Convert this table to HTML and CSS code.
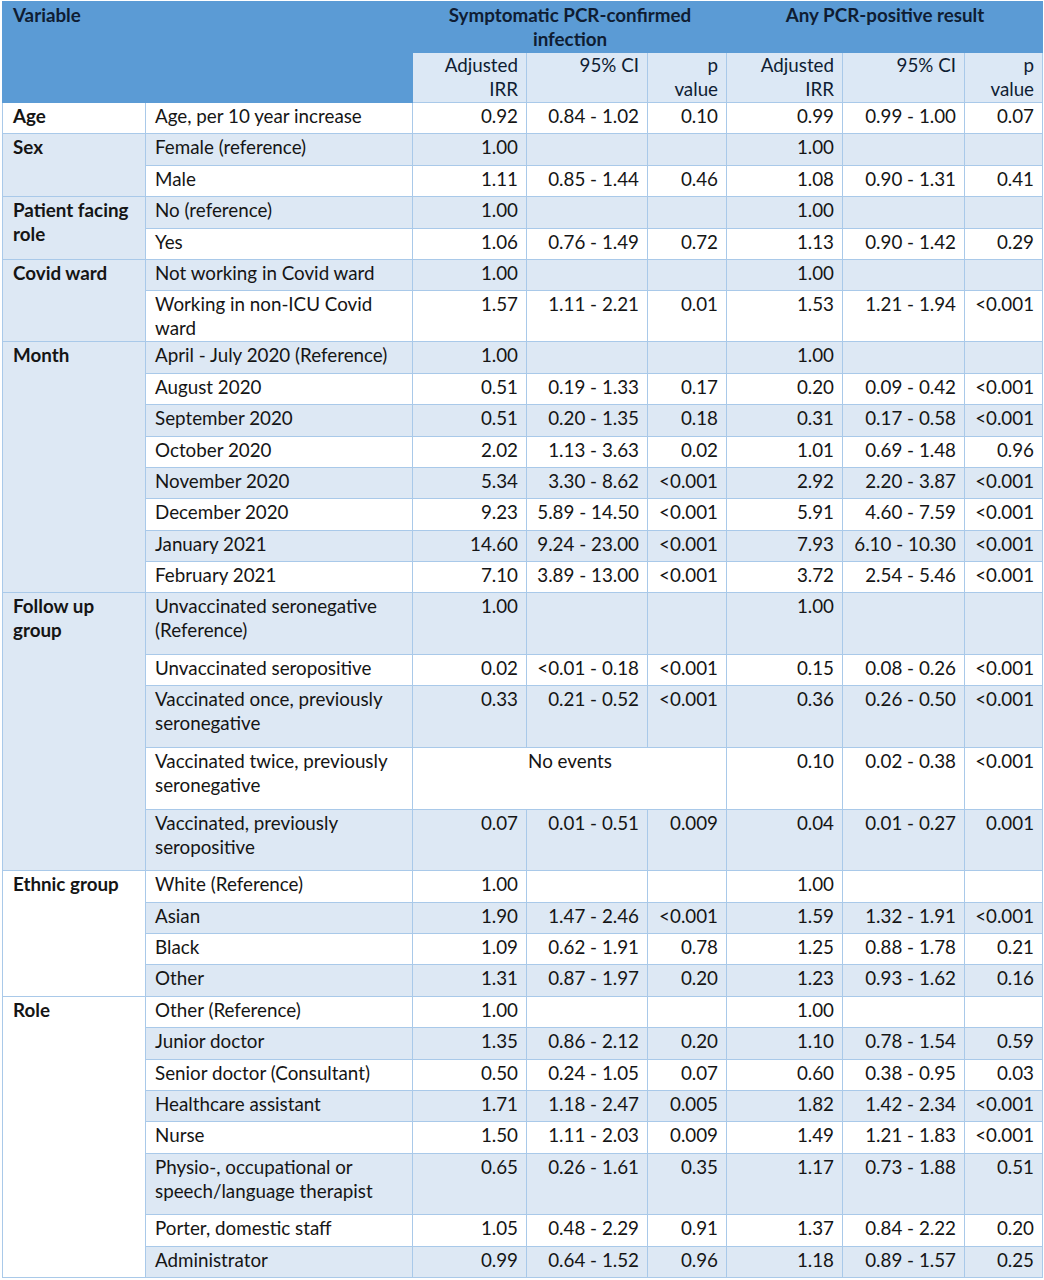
FILE: index.html
```html
<!DOCTYPE html>
<html lang="en">
<head>
  <meta charset="UTF-8" />
  <title>Incidence rate ratios</title>
  <link rel="stylesheet" href="styles.css">
</head>
<body>
  <table class="irr">
    <colgroup>
      <col class="c-var"><col class="c-level">
      <col class="c-irr"><col class="c-ci"><col class="c-p">
      <col class="c-irr2"><col class="c-ci2"><col class="c-p2">
    </colgroup>
    <thead>
      <tr class="head-top">
        <th colspan="2" rowspan="2" class="left">Variable</th>
        <th colspan="3">Symptomatic PCR-confirmed infection</th>
        <th colspan="3">Any PCR-positive result</th>
      </tr>
      <tr class="head-sub">
        <th>Adjusted IRR</th><th>95% CI</th><th>p<br>value</th>
        <th>Adjusted IRR</th><th>95% CI</th><th>p<br>value</th>
      </tr>
    </thead>
    <tbody>
      <tr>
        <td class="group">Age</td><td>Age, per 10 year increase</td>
        <td class="num">0.92</td><td class="num">0.84 - 1.02</td><td class="num">0.10</td>
        <td class="num">0.99</td><td class="num">0.99 - 1.00</td><td class="num">0.07</td>
      </tr>

      <tr class="band">
        <td class="group" rowspan="2">Sex</td><td>Female (reference)</td>
        <td class="num">1.00</td><td></td><td></td>
        <td class="num">1.00</td><td></td><td></td>
      </tr>
      <tr>
        <td>Male</td>
        <td class="num">1.11</td><td class="num">0.85 - 1.44</td><td class="num">0.46</td>
        <td class="num">1.08</td><td class="num">0.90 - 1.31</td><td class="num">0.41</td>
      </tr>

      <tr class="band">
        <td class="group" rowspan="2">Patient facing role</td><td>No (reference)</td>
        <td class="num">1.00</td><td></td><td></td>
        <td class="num">1.00</td><td></td><td></td>
      </tr>
      <tr>
        <td>Yes</td>
        <td class="num">1.06</td><td class="num">0.76 - 1.49</td><td class="num">0.72</td>
        <td class="num">1.13</td><td class="num">0.90 - 1.42</td><td class="num">0.29</td>
      </tr>

      <tr class="band">
        <td class="group" rowspan="2">Covid ward</td><td>Not working in Covid ward</td>
        <td class="num">1.00</td><td></td><td></td>
        <td class="num">1.00</td><td></td><td></td>
      </tr>
      <tr class="two-short">
        <td>Working in non-ICU Covid ward</td>
        <td class="num">1.57</td><td class="num">1.11 - 2.21</td><td class="num">0.01</td>
        <td class="num">1.53</td><td class="num">1.21 - 1.94</td><td class="num">&lt;0.001</td>
      </tr>

      <tr class="band">
        <td class="group" rowspan="8">Month</td><td>April - July 2020 (Reference)</td>
        <td class="num">1.00</td><td></td><td></td>
        <td class="num">1.00</td><td></td><td></td>
      </tr>
      <tr>
        <td>August 2020</td>
        <td class="num">0.51</td><td class="num">0.19 - 1.33</td><td class="num">0.17</td>
        <td class="num">0.20</td><td class="num">0.09 - 0.42</td><td class="num">&lt;0.001</td>
      </tr>
      <tr class="band">
        <td>September 2020</td>
        <td class="num">0.51</td><td class="num">0.20 - 1.35</td><td class="num">0.18</td>
        <td class="num">0.31</td><td class="num">0.17 - 0.58</td><td class="num">&lt;0.001</td>
      </tr>
      <tr>
        <td>October 2020</td>
        <td class="num">2.02</td><td class="num">1.13 - 3.63</td><td class="num">0.02</td>
        <td class="num">1.01</td><td class="num">0.69 - 1.48</td><td class="num">0.96</td>
      </tr>
      <tr class="band">
        <td>November 2020</td>
        <td class="num">5.34</td><td class="num">3.30 - 8.62</td><td class="num">&lt;0.001</td>
        <td class="num">2.92</td><td class="num">2.20 - 3.87</td><td class="num">&lt;0.001</td>
      </tr>
      <tr>
        <td>December 2020</td>
        <td class="num">9.23</td><td class="num">5.89 - 14.50</td><td class="num">&lt;0.001</td>
        <td class="num">5.91</td><td class="num">4.60 - 7.59</td><td class="num">&lt;0.001</td>
      </tr>
      <tr class="band">
        <td>January 2021</td>
        <td class="num">14.60</td><td class="num">9.24 - 23.00</td><td class="num">&lt;0.001</td>
        <td class="num">7.93</td><td class="num">6.10 - 10.30</td><td class="num">&lt;0.001</td>
      </tr>
      <tr>
        <td>February 2021</td>
        <td class="num">7.10</td><td class="num">3.89 - 13.00</td><td class="num">&lt;0.001</td>
        <td class="num">3.72</td><td class="num">2.54 - 5.46</td><td class="num">&lt;0.001</td>
      </tr>

      <tr class="band two">
        <td class="group" rowspan="5">Follow up group</td><td>Unvaccinated seronegative (Reference)</td>
        <td class="num">1.00</td><td></td><td></td>
        <td class="num">1.00</td><td></td><td></td>
      </tr>
      <tr>
        <td>Unvaccinated seropositive</td>
        <td class="num">0.02</td><td class="num">&lt;0.01 - 0.18</td><td class="num">&lt;0.001</td>
        <td class="num">0.15</td><td class="num">0.08 - 0.26</td><td class="num">&lt;0.001</td>
      </tr>
      <tr class="band two">
        <td>Vaccinated once, previously seronegative</td>
        <td class="num">0.33</td><td class="num">0.21 - 0.52</td><td class="num">&lt;0.001</td>
        <td class="num">0.36</td><td class="num">0.26 - 0.50</td><td class="num">&lt;0.001</td>
      </tr>
      <tr class="two">
        <td>Vaccinated twice, previously seronegative</td>
        <td colspan="3" class="none">No events</td>
        <td class="num">0.10</td><td class="num">0.02 - 0.38</td><td class="num">&lt;0.001</td>
      </tr>
      <tr class="band two">
        <td>Vaccinated, previously seropositive</td>
        <td class="num">0.07</td><td class="num">0.01 - 0.51</td><td class="num">0.009</td>
        <td class="num">0.04</td><td class="num">0.01 - 0.27</td><td class="num">0.001</td>
      </tr>

      <tr>
        <td class="group" rowspan="4">Ethnic group</td><td>White (Reference)</td>
        <td class="num">1.00</td><td></td><td></td>
        <td class="num">1.00</td><td></td><td></td>
      </tr>
      <tr class="band">
        <td>Asian</td>
        <td class="num">1.90</td><td class="num">1.47 - 2.46</td><td class="num">&lt;0.001</td>
        <td class="num">1.59</td><td class="num">1.32 - 1.91</td><td class="num">&lt;0.001</td>
      </tr>
      <tr>
        <td>Black</td>
        <td class="num">1.09</td><td class="num">0.62 - 1.91</td><td class="num">0.78</td>
        <td class="num">1.25</td><td class="num">0.88 - 1.78</td><td class="num">0.21</td>
      </tr>
      <tr class="band">
        <td>Other</td>
        <td class="num">1.31</td><td class="num">0.87 - 1.97</td><td class="num">0.20</td>
        <td class="num">1.23</td><td class="num">0.93 - 1.62</td><td class="num">0.16</td>
      </tr>

      <tr>
        <td class="group" rowspan="8">Role</td><td>Other (Reference)</td>
        <td class="num">1.00</td><td></td><td></td>
        <td class="num">1.00</td><td></td><td></td>
      </tr>
      <tr class="band">
        <td>Junior doctor</td>
        <td class="num">1.35</td><td class="num">0.86 - 2.12</td><td class="num">0.20</td>
        <td class="num">1.10</td><td class="num">0.78 - 1.54</td><td class="num">0.59</td>
      </tr>
      <tr>
        <td>Senior doctor (Consultant)</td>
        <td class="num">0.50</td><td class="num">0.24 - 1.05</td><td class="num">0.07</td>
        <td class="num">0.60</td><td class="num">0.38 - 0.95</td><td class="num">0.03</td>
      </tr>
      <tr class="band">
        <td>Healthcare assistant</td>
        <td class="num">1.71</td><td class="num">1.18 - 2.47</td><td class="num">0.005</td>
        <td class="num">1.82</td><td class="num">1.42 - 2.34</td><td class="num">&lt;0.001</td>
      </tr>
      <tr>
        <td>Nurse</td>
        <td class="num">1.50</td><td class="num">1.11 - 2.03</td><td class="num">0.009</td>
        <td class="num">1.49</td><td class="num">1.21 - 1.83</td><td class="num">&lt;0.001</td>
      </tr>
      <tr class="band two">
        <td>Physio-, occupational or speech/language therapist</td>
        <td class="num">0.65</td><td class="num">0.26 - 1.61</td><td class="num">0.35</td>
        <td class="num">1.17</td><td class="num">0.73 - 1.88</td><td class="num">0.51</td>
      </tr>
      <tr>
        <td>Porter, domestic staff</td>
        <td class="num">1.05</td><td class="num">0.48 - 2.29</td><td class="num">0.91</td>
        <td class="num">1.37</td><td class="num">0.84 - 2.22</td><td class="num">0.20</td>
      </tr>
      <tr class="band">
        <td>Administrator</td>
        <td class="num">0.99</td><td class="num">0.64 - 1.52</td><td class="num">0.96</td>
        <td class="num">1.18</td><td class="num">0.89 - 1.57</td><td class="num">0.25</td>
      </tr>
    </tbody>
  </table>
</body>
</html>
```

FILE: styles.css
```css
body {
  margin: 0;
  padding: 1px 2px;
  background-color: #ffffff;
  font-family: Lato, "Open Sans", sans-serif;
  font-size: 18.8px;
  color: #151515;
}

.irr {
  width: 1040px;
  border-collapse: collapse;
  table-layout: fixed;
  line-height: 24px;
}

.c-var { width: 143px; }
.c-level { width: 267px; }
.c-irr { width: 114px; }
.c-ci { width: 121px; }
.c-p { width: 79px; }
.c-irr2 { width: 116px; }
.c-ci2 { width: 122px; }
.c-p2 { width: 78px; }

th, td {
  border: 1px solid #a9c9e9;
  vertical-align: top;
  padding: 1px 8px 1px 9px;
  text-align: left;
}

/* header */
thead th {
  font-weight: normal;
  color: #0f1d33;
}

.head-top { height: 51px; }
.head-sub { height: 50px; }

.head-top th {
  background-color: #5b9bd5; /* blue header */
  border-color: #5b9bd5;
  font-weight: bold;
  text-align: center;
}

.head-top th.left {
  text-align: left;
  padding-left: 10px;
}

.head-sub th {
  background-color: #dce8f5;
  text-align: right;
  padding-top: 0;
}

/* body rows */
tbody tr { height: 31.4px; }
tbody tr.two-short { height: 50.7px; }
tbody tr.two { height: 61.6px; }

tbody td { background-color: #ffffff; }
tbody tr.band td { background-color: #dde8f4; }

td.group {
  font-weight: bold;
  padding-left: 10px;
}

td.num { text-align: right; }

td.none { text-align: center; }
```
